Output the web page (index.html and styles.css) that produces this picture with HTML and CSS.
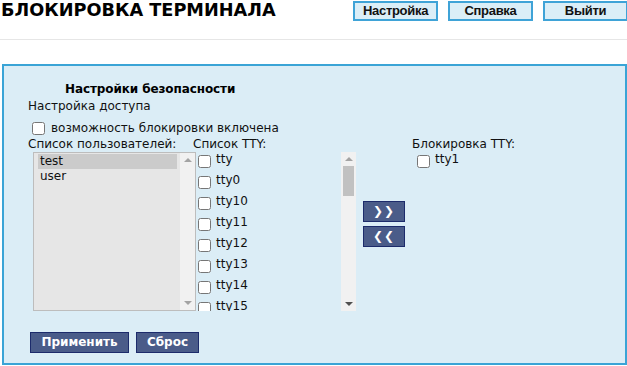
FILE: index.html
```html
<!DOCTYPE html>
<html lang="ru">
<head>
<meta charset="utf-8">
<title>Блокировка терминала</title>
<link rel="stylesheet" href="styles.css">
</head>
<body>
<header class="topbar">
  <h1 class="title">БЛОКИРОВКА ТЕРМИНАЛА</h1>
  <nav class="topnav">
    <button class="navbtn">Настройка</button>
    <button class="navbtn">Справка</button>
    <button class="navbtn">Выйти</button>
  </nav>
</header>
<main class="panel">
  <h2 class="section-title">Настройки безопасности</h2>
  <div class="subtitle">Настройка доступа</div>
  <label class="check-row"><input type="checkbox"><span>возможность блокировки включена</span></label>
  <div class="lists">
    <div class="col-label">Список пользователей:</div>
    <div class="col-label tty-label">Список TTY:</div>
    <div class="col-label"></div>
    <div class="col-label">Блокировка TTY:</div>

    <div class="users-list">
      <div class="users-options">
        <div class="option selected">test</div>
        <div class="option">user</div>
      </div>
      <div class="scrollbar">
        <div class="sb-btn"><span class="arrow-up dim"></span></div>
        <div class="sb-track"></div>
        <div class="sb-btn"><span class="arrow-down dim"></span></div>
      </div>
    </div>

    <div class="tty-list">
      <div class="tty-items">
        <label class="tty-item"><input type="checkbox"><span>tty</span></label>
        <label class="tty-item"><input type="checkbox"><span>tty0</span></label>
        <label class="tty-item"><input type="checkbox"><span>tty10</span></label>
        <label class="tty-item"><input type="checkbox"><span>tty11</span></label>
        <label class="tty-item"><input type="checkbox"><span>tty12</span></label>
        <label class="tty-item"><input type="checkbox"><span>tty13</span></label>
        <label class="tty-item"><input type="checkbox"><span>tty14</span></label>
        <label class="tty-item"><input type="checkbox"><span>tty15</span></label>
      </div>
      <div class="scrollbar">
        <div class="sb-btn"><span class="arrow-up dim"></span></div>
        <div class="sb-track"><div class="sb-thumb"></div></div>
        <div class="sb-btn"><span class="arrow-down"></span></div>
      </div>
    </div>

    <div class="move-btns">
      <button class="move">&#x276F;&#x276F;</button>
      <button class="move">&#x276E;&#x276E;</button>
    </div>

    <div class="lock-list">
      <label class="tty-item lock-item"><input type="checkbox"><span>tty1</span></label>
    </div>
  </div>
  <div class="actions">
    <button class="action apply">Применить</button>
    <button class="action reset">Сброс</button>
  </div>
</main>
</body>
</html>
```
FILE: styles.css
```css
body {
  margin: 0;
  font-family: "DejaVu Sans", sans-serif;
  font-size: 12px;
  color: #111;
  background: #fff;
}

.topbar {
  display: flex;
  align-items: flex-start;
  height: 39px;
  border-bottom: 1px solid #e6e6e6;
}

.title {
  margin: 0;
  padding-left: 1px;
  font-size: 17.7px;
  font-weight: bold;
  line-height: 21px;
  color: #000;
}

.topnav {
  margin-left: auto;
  margin-top: 1px;
  margin-right: -1px;
  display: flex;
  gap: 10px;
}

.navbtn {
  box-sizing: border-box;
  width: 85px;
  height: 20px;
  padding: 0;
  border: 2px solid #3fa3d7;
  background: #dbeef7;
  color: #111;
  font-family: "Liberation Sans", Arial, sans-serif;
  font-weight: bold;
  font-size: 13px;
  letter-spacing: -0.3px;
  line-height: 16px;
}

.panel {
  display: block;
  margin: 24px 0 0 2px;
  border: 2px solid #3aa4d6;
  background: #dbedf6;
  padding: 16px 0 10px 24px;
}

.section-title {
  margin: 0 0 0 37px;
  font-size: 12px;
  letter-spacing: -0.1px;
  line-height: 14px;
  height: 17px;
  color: #000;
}

.subtitle {
  line-height: 14px;
  height: 22px;
}

.check-row {
  display: flex;
  align-items: flex-start;
  height: 16px;
}

.check-row input {
  margin: 1px 3px 0 4px;
  width: 13px;
  height: 13px;
}

.check-row span {
  line-height: 14px;
  margin-left: 3px;
}

.lists {
  display: grid;
  grid-template-columns: 168px 160px 56px auto;
  grid-template-rows: 15px auto;
}

.col-label {
  line-height: 15px;
  white-space: nowrap;
}

.tty-label {
  margin-left: -3px;
}

.users-list {
  box-sizing: border-box;
  display: flex;
  margin-left: 5px;
  width: 163px;
  height: 159px;
  border: 1px solid #bdbdbd;
  background: #e6e6e6;
}

.users-options {
  flex: 1;
  padding-top: 1px;
}

.option {
  margin: 0 3px 0 4px;
  padding-left: 2px;
  line-height: 15px;
}

.option.selected {
  background: #cbcbcb;
}

.scrollbar {
  width: 15px;
  display: flex;
  flex-direction: column;
  background: #f1f1f1;
}

.sb-btn {
  height: 14px;
  display: flex;
  align-items: center;
  justify-content: center;
}

.sb-track {
  flex: 1;
}

.sb-thumb {
  height: 30px;
  margin: 0 2px;
  background: #c1c1c1;
}

.arrow-up,
.arrow-down {
  width: 0;
  height: 0;
  border-left: 4px solid transparent;
  border-right: 4px solid transparent;
}

.arrow-up {
  border-bottom: 4px solid #505050;
}

.arrow-down {
  border-top: 4px solid #505050;
}

.arrow-up.dim {
  border-bottom-color: #a3a3a3;
}

.arrow-down.dim {
  border-top-color: #a3a3a3;
}

.tty-list {
  display: flex;
  height: 159px;
}

.tty-items {
  flex: 1;
  overflow: hidden;
}

.tty-item {
  display: flex;
  align-items: flex-start;
  height: 21px;
}

.tty-item input {
  margin: 3px 3px 0 2px;
  width: 13px;
  height: 13px;
}

.tty-item span {
  line-height: 14px;
  margin-left: 2px;
}

.lock-item input {
  margin-left: 5px;
}

.move-btns {
  padding: 49px 0 0 7px;
  display: flex;
  flex-direction: column;
  align-items: flex-start;
  gap: 4px;
}

.move {
  box-sizing: border-box;
  width: 42px;
  height: 21px;
  padding: 0;
  border: 1px solid #1c2b6b;
  background: #4a5c89;
  color: #fff;
  font-family: "DejaVu Sans", sans-serif;
  font-weight: bold;
  font-size: 12px;
  letter-spacing: 1px;
  line-height: 17px;
}

.actions {
  display: flex;
  gap: 7px;
  margin: 21px 0 0 2px;
}

.action {
  box-sizing: border-box;
  height: 21px;
  padding: 0;
  border: 1px solid #1c2b6b;
  background: #4a5c89;
  color: #fff;
  font-family: "DejaVu Sans", sans-serif;
  font-weight: bold;
  font-size: 12px;
  line-height: 17px;
}

.apply {
  width: 99px;
}

.reset {
  width: 63px;
}
```
